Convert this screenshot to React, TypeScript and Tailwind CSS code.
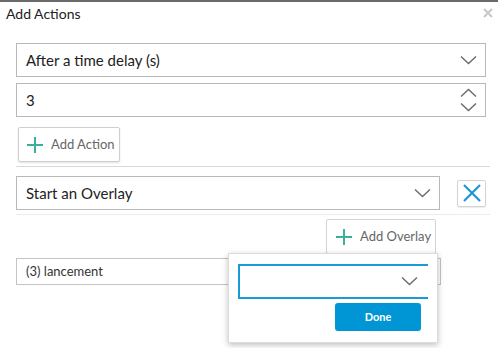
import React from 'react';

// chevron for selects
function Chevron({ up = false, className = '' }: { up?: boolean; className?: string }) {
  return (
    <svg width="17" height="9" viewBox="0 0 17 9" className={className}>
      <path
        d={up ? 'M1 8.5 L8.5 1.5 L16 8.5' : 'M1 0.5 L8.5 7.5 L16 0.5'}
        fill="none"
        stroke="#6b6b6b"
        strokeWidth="1.4"
      />
    </svg>
  );
}

function Plus() {
  return (
    <svg width="16" height="16" viewBox="0 0 16 16">
      <path d="M8 0 V16 M0 8 H16" stroke="#3aaf9a" strokeWidth="2" />
    </svg>
  );
}

export default function App() {
  return (
    <div
      className="relative w-[498px] h-[348px] bg-white overflow-hidden border-t-2 border-[#6a6a6a] text-[#333]"
      style={{ fontFamily: 'Lato, "Liberation Sans", sans-serif' }}
    >
      {/* header */}
      <div className="flex items-center justify-between h-[22px] pl-[6px] pr-[5px]">
        <span className="text-[14px] text-[#222]">Add Actions</span>
        <svg width="10" height="10" viewBox="0 0 10 10">
          <path d="M1 1 L9 9 M9 1 L1 9" stroke="#c8c8c8" strokeWidth="2" />
        </svg>
      </div>

      <div className="pl-[16px] pt-[19px]">
        {/* trigger select */}
        <div className="w-[470px] h-[34px] border border-[#b8b8b8] flex items-center justify-between pl-[9px] pr-[8px]">
          <span className="text-[15px] text-[#222]">After a time delay (s)</span>
          <Chevron />
        </div>

        {/* number input */}
        <div className="mt-[6px] w-[470px] h-[34px] border border-[#b8b8b8] flex items-center justify-between pl-[9px] pr-[8px]">
          <span className="text-[15px] text-[#222]">3</span>
          <div className="flex flex-col gap-[6px]">
            <Chevron up />
            <Chevron />
          </div>
        </div>

        <button className="mt-[10px] ml-[2px] w-[102px] h-[35px] border border-[#cfcfcf] rounded-[2px] shadow-[0_1px_2px_rgba(0,0,0,0.12)] flex items-center gap-[8px] pl-[8px] text-[13px] text-[#666]">
          <Plus />
          Add Action
        </button>

        <div className="mt-[4px] w-[474px] border-t border-[#d9d9d9]" />

        {/* action row */}
        <div className="mt-[9px] flex items-center">
          <div className="w-[424px] h-[34px] border border-[#b8b8b8] flex items-center justify-between pl-[9px] pr-[8px]">
            <span className="text-[15px] text-[#222]">Start an Overlay</span>
            <Chevron />
          </div>
          <button className="ml-[17px] w-[29px] h-[27px] border border-[#d4d4d4] rounded-[2px] flex items-center justify-center shadow-[0_1px_1px_rgba(0,0,0,0.08)]">
            <svg width="20" height="20" viewBox="0 0 20 20">
              <path d="M2 2 L18 18 M18 2 L2 18" stroke="#1e96d4" strokeWidth="2.2" />
            </svg>
          </button>
        </div>

        <div className="mt-[4px] w-[474px] border-t border-[#ececec]" />

        <div className="w-[424px] flex justify-end mt-[4px]">
          <button className="w-[110px] h-[35px] border border-[#d4d4d4] rounded-[2px] flex items-center gap-[8px] pl-[9px] text-[13px] text-[#666] mr-[4px]">
            <Plus />
            Add Overlay
          </button>
        </div>

        <div className="mt-[4px] w-[425px] h-[27px] border border-[#c4c4c4] flex items-center pl-[9px]">
          <span className="text-[13px] text-[#333]">(3) lancement</span>
        </div>
      </div>

      {/* overlay picker popup */}
      <div className="absolute left-[228px] top-[251px] w-[210px] h-[90px] bg-white border border-[#dcdcdc] shadow-[0_2px_6px_rgba(0,0,0,0.25)] pl-[9px] pt-[10px]">
        <div className="w-[190px] h-[35px] border-2 border-r-0 border-[#1a9ad6] flex items-center justify-end pr-[10px]">
          <Chevron />
        </div>
        <div className="flex justify-end pr-[16px] mt-[4px]">
          <button className="w-[86px] h-[28px] bg-[#0096d6] rounded-[3px] text-white text-[11px] font-bold">
            Done
          </button>
        </div>
      </div>
    </div>
  );
}
